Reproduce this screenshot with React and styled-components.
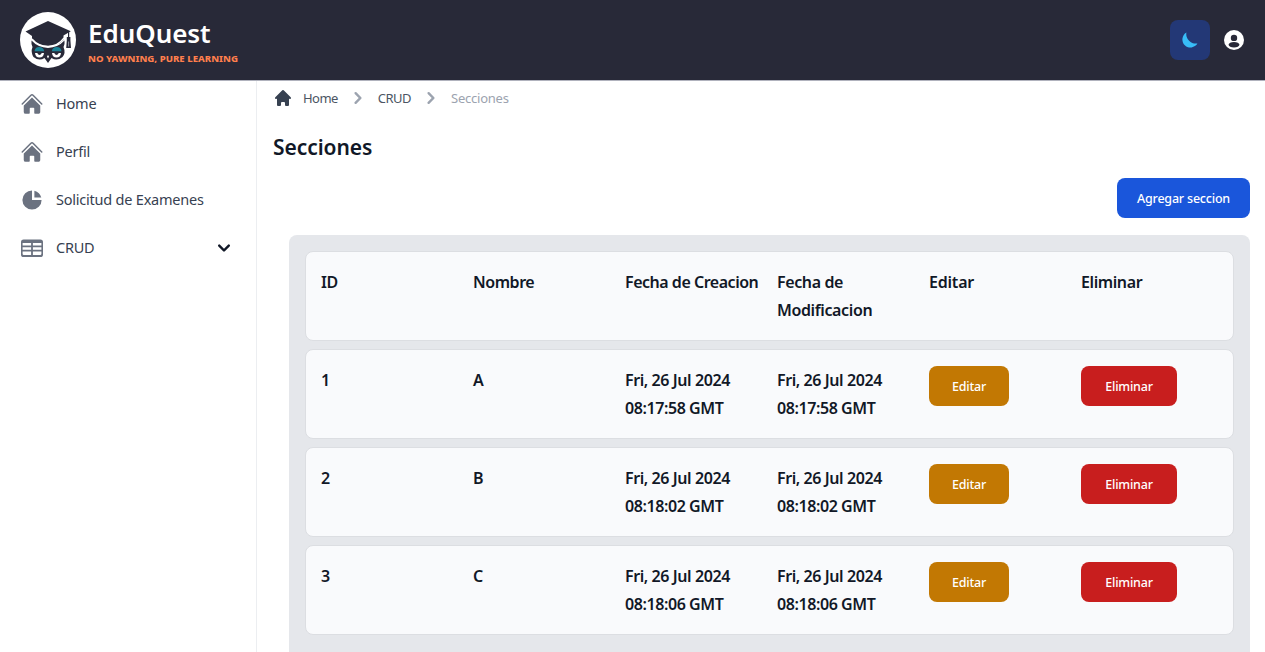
import React from 'react';
import styled, { createGlobalStyle } from 'styled-components';
import { HiHome, HiChartPie, HiChevronRight, HiChevronDown } from 'react-icons/hi';
import { HiHome as HiHomeModern } from 'react-icons/hi2';

const GlobalStyle = createGlobalStyle`
  *, *::before, *::after { box-sizing: border-box; }
  body {
    margin: 0;
    height: 652px;
    overflow: hidden;
    background: #fff;
    color: #111827;
    font-family: "Noto Sans", "Open Sans", sans-serif;
  }
  svg { display: block; flex: none; }
`;

const Page = styled.div`
  display: flex;
  flex-direction: column;
  height: 652px;
  overflow: hidden;
`;

const Header = styled.header`
  flex: none;
  display: flex;
  align-items: center;
  justify-content: space-between;
  height: 81px;
  padding: 0 20px;
  background: #282938;
  border-bottom: 1px solid #b0b2bd;
`;

const Brand = styled.div`
  display: flex;
  align-items: center;
  gap: 12px;
`;

const BrandText = styled.div`
  padding-top: 3px;
`;

const BrandName = styled.div`
  font-size: 26px;
  line-height: 32px;
  font-weight: 600;
  letter-spacing: -0.05px;
  color: #fff;
`;

const Tagline = styled.div`
  margin-top: 2px;
  font-size: 9.6px;
  line-height: 15px;
  font-weight: 800;
  letter-spacing: 0;
  white-space: nowrap;
  color: #ff7f4d;
`;

const HeaderActions = styled.div`
  display: flex;
  align-items: center;
  gap: 14px;
  margin-right: 1px;
`;

const ThemeButton = styled.button`
  display: grid;
  place-items: center;
  width: 40px;
  height: 40px;
  padding: 0;
  border: 0;
  border-radius: 8px;
  background: #233876;
`;

const Body = styled.div`
  flex: 1;
  display: flex;
  min-height: 0;
`;

const Sidebar = styled.nav`
  flex: none;
  display: flex;
  flex-direction: column;
  gap: 8px;
  width: 257px;
  padding: 3px 12px 0;
  border-right: 1px solid #eceef1;
`;

const NavItem = styled.a`
  display: flex;
  align-items: center;
  height: 40px;
  padding: 0 8px;
  color: #6b7280;
`;

const NavLabel = styled.span`
  flex: 1;
  margin: -2px 0 0 12px;
  font-size: 14.5px;
  line-height: 24px;
  letter-spacing: -0.22px;
  white-space: nowrap;
  color: #374151;
`;

const Content = styled.main`
  flex: 1;
  display: flex;
  flex-direction: column;
  min-width: 0;
  padding: 7px 15px 0 16px;
`;

const Breadcrumb = styled.div`
  display: flex;
  align-items: center;
  height: 20px;
  font-size: 13px;
  color: #9ca3af;
`;

const Crumb = styled.span`
  margin: 0 8px 0 ${(p) => p.$before};
  letter-spacing: ${(p) => p.$spacing};
  color: ${(p) => (p.$current ? '#9ca3af' : '#4b5563')};
`;

const Title = styled.h1`
  margin: 25px 0 0;
  font-size: 21px;
  line-height: 28px;
  font-weight: 600;
  letter-spacing: -0.05px;
`;

const Toolbar = styled.div`
  display: flex;
  justify-content: flex-end;
  margin-top: 17px;
`;

const Button = styled.button`
  height: 40px;
  width: ${(p) => p.$width};
  padding: 2px 0 0;
  border: 0;
  border-radius: 8px;
  background: ${(p) => p.$color};
  color: #fff;
  font: 500 12.5px/20px "Noto Sans", sans-serif;
  letter-spacing: -0.2px;
`;

const Panel = styled.section`
  flex: none;
  display: flex;
  flex-direction: column;
  gap: 8px;
  margin: 17px 0 0 16px;
  padding: 16px;
  min-height: 440px;
  border-radius: 8px;
  background: #e5e7eb;
`;

const Row = styled.div`
  display: grid;
  grid-template-columns: repeat(6, 136px);
  column-gap: 16px;
  height: 90.1px;
  padding: 16px 15px;
  border: 1px solid #dcdee2;
  border-radius: 8px;
  background: #f9fafc;
`;

const Cell = styled.div`
  font-size: 16px;
  line-height: 28px;
  font-weight: 600;
  letter-spacing: ${(p) => p.$spacing || '-0.2px'};
  white-space: pre;
`;

const OwlLogo = () => (
  <svg width="56" height="56" viewBox="0 0 56 56">
    <circle cx="28" cy="28" r="28" fill="#fff" />
    <path d="M28 9 L50.8 19.3 L43.5 23.5 V28 Q38 34 28 34 Q18 34 12 27.5 V24 L5.5 19.5 Z" fill="#282938" />
    <path d="M12 27 Q18 34.2 28 34.5 Q38 34.2 44 26" fill="none" stroke="#fff" strokeWidth="1.3" />
    <path d="M11.5 28.5 Q18 35.5 28 36 Q38 35.5 44.5 28.5 Q45 32.5 43.5 35 Q46 41 42.5 45 Q37 49.5 31.5 46 L28 51 L24.5 46 Q19 49.5 13.5 45 Q10.5 40 12.5 35 Q11 32 11.5 28.5 Z" fill="#282938" />
    <path d="M14.5 39.3 Q15 35 19.3 35 Q23.7 35.2 24.2 39.3 Z M31.8 39.3 Q32.3 35.2 36.7 35 Q41 35 41.5 39.3 Z" fill="#1a8296" />
    <path d="M15 41 H24 Q23.5 45.5 19.5 45.5 Q15.5 45.5 15 41 Z M32 41 H41 Q40.5 45.5 36.5 45.5 Q32.5 45.5 32 41 Z" fill="#fff" />
    <path d="M17.2 41 Q19.5 45 21.8 41 Z M34.2 41 Q36.5 45 38.8 41 Z" fill="#282938" />
    <path d="M27 44.5 L28 43 L29 44.5 L28 46.5 Z" fill="#fff" />
    <path d="M48.6 20 V26" stroke="#282938" strokeWidth="1.2" />
    <path d="M46.8 25 H50.4 V28.5 L51 36 H46.2 L46.8 28.5 Z" fill="#282938" />
    <path d="M48.6 29.5 V34.5" stroke="#aaaeb8" strokeWidth="0.8" />
  </svg>
);

const Moon = () => (
  <svg width="16" height="16" viewBox="0 0 16 16">
    <path d="M4.4 .6 A8 8 0 1 0 15.4 11.4 A9.4 9.4 0 0 1 4.4 .6 Z" fill="#38bdf8" />
  </svg>
);

const Account = () => (
  <svg width="20" height="20" viewBox="0 0 20 20">
    <circle cx="10" cy="10" r="10" fill="#fff" />
    <circle cx="10" cy="7.9" r="3.2" fill="#282938" />
    <ellipse cx="10" cy="14.8" rx="5.4" ry="2.8" fill="#282938" />
  </svg>
);

const TableIcon = () => (
  <svg width="24" height="24" viewBox="0 0 24 24">
    <rect x="1" y="3.5" width="22" height="17.5" rx="2.6" fill="#6b7280" />
    <path
      d="M2.6 7h8.5v2.6H2.6z M12.9 7h8.5v2.6h-8.5z M2.6 11.2h8.5v2.6H2.6z M12.9 11.2h8.5v2.6h-8.5z M2.6 15.4h8.5V19H3.8a1.2 1.2 0 0 1-1.2-1.2z M12.9 15.4h8.5v2.4a1.2 1.2 0 0 1-1.2 1.2h-7.3z"
      fill="#fff"
    />
  </svg>
);

const columns = [
  ['ID', '-0.4px'],
  ['Nombre', '-0.45px'],
  ['Fecha de Creacion', '-0.48px'],
  ['Fecha de\nModificacion', '-0.38px'],
  ['Editar', '-0.2px'],
  ['Eliminar', '-0.4px'],
];

const sections = [
  { id: 1, name: 'A', date: 'Fri, 26 Jul 2024', time: '08:17:58 GMT' },
  { id: 2, name: 'B', date: 'Fri, 26 Jul 2024', time: '08:18:02 GMT' },
  { id: 3, name: 'C', date: 'Fri, 26 Jul 2024', time: '08:18:06 GMT' },
];

export default function App() {
  return (
    <Page>
      <GlobalStyle />
      <Header>
        <Brand>
          <OwlLogo />
          <BrandText>
            <BrandName>EduQuest</BrandName>
            <Tagline>NO YAWNING, PURE LEARNING</Tagline>
          </BrandText>
        </Brand>
        <HeaderActions>
          <ThemeButton aria-label="Tema"><Moon /></ThemeButton>
          <Account />
        </HeaderActions>
      </Header>
      <Body>
        <Sidebar>
          <NavItem><HiHomeModern size={24} /><NavLabel>Home</NavLabel></NavItem>
          <NavItem><HiHomeModern size={24} /><NavLabel>Perfil</NavLabel></NavItem>
          <NavItem><HiChartPie size={24} /><NavLabel>Solicitud de Examenes</NavLabel></NavItem>
          <NavItem>
            <TableIcon />
            <NavLabel>CRUD</NavLabel>
            <HiChevronDown size={24} color="#111827" />
          </NavItem>
        </Sidebar>
        <Content>
          <Breadcrumb>
            <HiHome size={20} color="#374151" />
            <Crumb $before="10px" $spacing="-0.55px">Home</Crumb>
            <HiChevronRight size={24} />
            <Crumb $before="8px" $spacing="-0.5px">CRUD</Crumb>
            <HiChevronRight size={24} />
            <Crumb $before="8px" $spacing="-0.25px" $current>Secciones</Crumb>
          </Breadcrumb>
          <Title>Secciones</Title>
          <Toolbar>
            <Button $width="133px" $color="#1a56db">Agregar seccion</Button>
          </Toolbar>
          <Panel>
            <Row>
              {columns.map(([label, spacing]) => <Cell key={label} $spacing={spacing}>{label}</Cell>)}
            </Row>
            {sections.map((s) => (
              <Row key={s.id}>
                <Cell>{s.id}</Cell>
                <Cell>{s.name}</Cell>
                <Cell $spacing="-0.42px">{`${s.date}\n${s.time}`}</Cell>
                <Cell $spacing="-0.42px">{`${s.date}\n${s.time}`}</Cell>
                <div><Button $width="80px" $color="#c27803">Editar</Button></div>
                <div><Button $width="96px" $color="#c81e1e">Eliminar</Button></div>
              </Row>
            ))}
          </Panel>
        </Content>
      </Body>
    </Page>
  );
}
